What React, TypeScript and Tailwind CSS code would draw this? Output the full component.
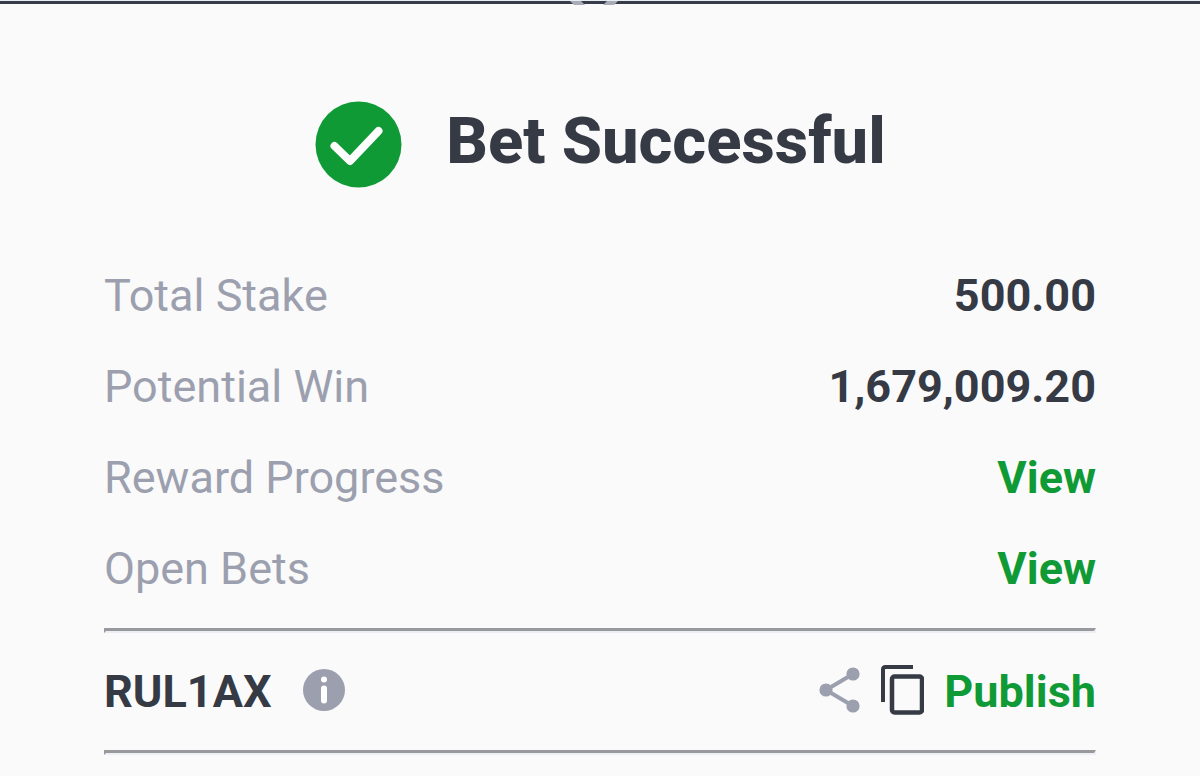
import type { ReactNode } from "react";

function Row({ label, children }: { label: string; children: ReactNode }) {
  return (
    <div className="flex h-[91px] items-center justify-between">
      <dt className="font-normal text-[#9ca0ae]">{label}</dt>
      <dd className="font-bold text-[#353a45]">{children}</dd>
    </div>
  );
}

function Rule() {
  return <hr className="h-[5px] border-t-[3px] border-r-2 border-b-2 border-l-2 border-t-[#98999d] border-r-[#eeeff4] border-b-[#eeeff4] border-l-[#98999d]" />;
}

export default function App() {
  return (
    <main className="min-h-screen overflow-hidden bg-[#fafafb] font-['Roboto',sans-serif] text-[45px] leading-[54px]">
      <div className="flex h-1 justify-center border-t border-[#e7edf4] bg-[#363d48]">
        <svg className="h-[5px] w-[60px] shrink-0" viewBox="0 0 60 5" aria-hidden="true">
          <path d="M0 0h11l4 4H4zM37 0h11l-4 4H33z" fill="#aaadb8" />
        </svg>
      </div>
      <div className="px-[104px]">
        <header className="flex items-center justify-center gap-11 pt-24">
          <svg className="size-[88px]" viewBox="0 0 88 88" aria-hidden="true">
            <circle cx="44.500" cy="44.500" r="43" fill="#109a36" />
            <path d="m20.500 46 15.500 15 28.500-30" fill="none" stroke="#fff" strokeWidth="8" strokeLinecap="round" strokeLinejoin="round" />
          </svg>
          <h1 className="pb-1.5 text-[65px] leading-[80px] font-extrabold text-[#353a45]">Bet Successful</h1>
        </header>
        <dl className="pt-[62px]">
          <Row label="Total Stake">500.00</Row>
          <Row label="Potential Win">1,679,009.20</Row>
          <Row label="Reward Progress"><a href="#rewards" className="text-[#109a36]">View</a></Row>
          <Row label="Open Bets"><a href="#bets" className="text-[#109a36]">View</a></Row>
        </dl>
        <div className="pt-[14px]"><Rule /></div>
        <div className="flex h-[117px] items-center justify-between font-bold text-[#353a45]">
          <div className="flex items-center gap-8">
            <span>RUL1AX</span>
            <button type="button" className="pb-1" aria-label="Booking code information">
              <svg className="size-[42px]" viewBox="0 0 42 42"><circle cx="21" cy="21" r="21" fill="#9ca0ae" /><path d="M21 19.500v12" stroke="#fff" strokeWidth="6" strokeLinecap="round" /><circle cx="21" cy="10.500" r="3" fill="#fff" /></svg>
            </button>
          </div>
          <div className="flex items-center gap-5">
            <button type="button" className="pb-1" aria-label="Share">
              <svg className="h-[46px] w-[42px]" viewBox="0 0 42 46"><path d="M35 7 8 23l27 16" fill="none" stroke="#9ca0ae" strokeWidth="4" /><g fill="#9ca0ae"><circle cx="35" cy="7" r="6.6" /><circle cx="8" cy="23" r="6.6" /><circle cx="35" cy="39" r="6.6" /></g></svg>
            </button>
            <button type="button" className="pb-1" aria-label="Copy">
              <svg className="h-[50px] w-11" viewBox="0 0 44 50"><path d="M3 37V4.500Q3 2 5.500 2H33" fill="none" stroke="#353a45" strokeWidth="4" /><rect x="12" y="11.500" width="30" height="36" rx="2.500" fill="none" stroke="#353a45" strokeWidth="4.500" /></svg>
            </button>
            <button type="button" className="text-[#109a36]">Publish</button>
          </div>
        </div>
        <Rule />
      </div>
    </main>
  );
}
